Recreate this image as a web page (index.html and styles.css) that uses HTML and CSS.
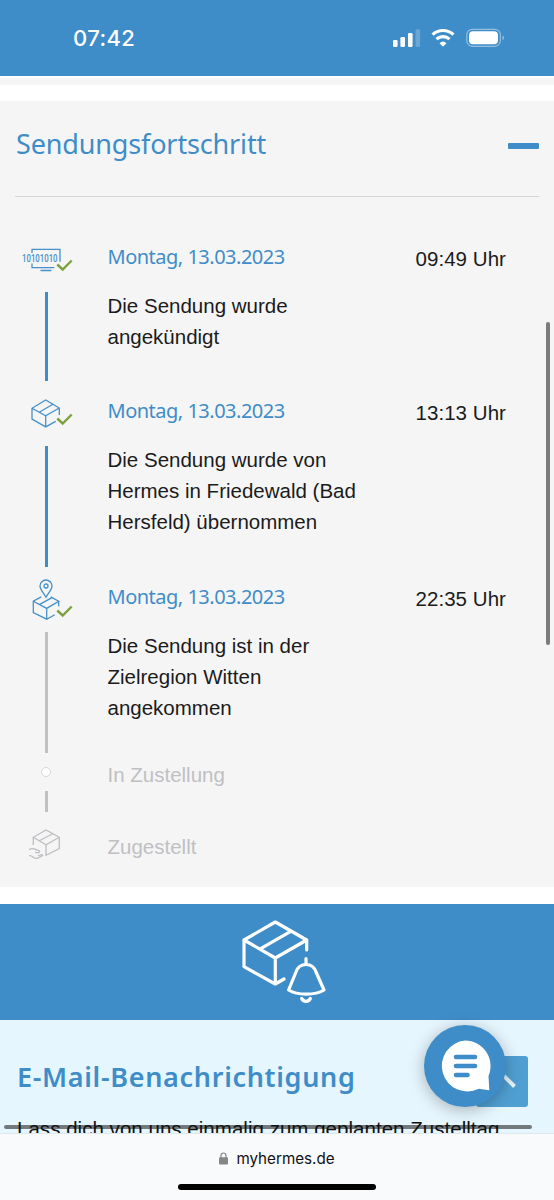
FILE: index.html
```html
<!DOCTYPE html>
<html lang="de">
<head>
    <meta charset="UTF-8">
    <meta name="viewport" content="width=device-width, initial-scale=1.0">
    <title>Sendungsverfolgung</title>
    <link rel="stylesheet" href="styles.css">
</head>
<body>
    <header class="status-bar">
        <span class="clock">07:42</span>
        <svg class="status-icons" width="114" height="22" viewBox="0 0 114 22">
            <g fill="#fff">
                <rect x="1" y="13" width="4.6" height="7" rx="1.3"/>
                <rect x="8.4" y="10" width="4.6" height="10" rx="1.3"/>
                <rect x="16" y="6" width="4.6" height="14" rx="1.3"/>
                <rect x="23.5" y="2.3" width="4.6" height="17.7" rx="1.3" opacity=".22"/>
                <path d="M51 19.700l-3.500-3.500a5.200 5.200 0 0 1 7 0z"/>
                <rect x="77" y="4.300" width="29" height="13" rx="4"/>
                <path d="M110.500 8.600c2 .8 2 3.800 0 4.600z" opacity=".45"/>
            </g>
            <g fill="none" stroke="#fff">
                <path d="M40.600 7.700a15 15 0 0 1 20.800 0M44.500 12.200a9.400 9.400 0 0 1 13 0" stroke-width="3.200"/>
                <rect x="74.800" y="2.300" width="33.500" height="17" rx="5.500" stroke-width="1.200" opacity=".45"/>
            </g>
        </svg>
    </header>

    <main class="page">
        <div class="previous-section"></div>

        <section class="progress">
            <div class="progress-head">
                <h2>Sendungsfortschritt</h2>
                <span class="collapse"></span>
            </div>

            <div class="step">
                <div class="rail">
                    <svg class="icon" width="60" height="50" viewBox="0 0 60 50">
                        <path d="M16 11V7.300h28v12.500M16 21.500v4.200h22.300M24.500 28.500h11"/>
                        <text x="6" y="19.500" textLength="35.500" lengthAdjust="spacingAndGlyphs">10101010</text>
                        <path class="check" d="M41.300 22.500l5.400 5 9-9"/>
                    </svg>
                    <span class="line"></span>
                </div>
                <div class="info">
                    <h3>Montag, 13.03.2023</h3>
                    <p>Die Sendung wurde angekündigt</p>
                </div>
                <span class="time">09:49 Uhr</span>
            </div>

            <div class="step">
                <div class="rail">
                    <svg class="icon" width="60" height="50" viewBox="0 0 60 50">
                        <path d="M43.300 19v-7L29.700 3.900 16 12.300V23l13.700 7.900 10-5.500M16 12.300l13.700 7.500L43.300 12M29.700 19.800v11.100M23.300 16.200L37.300 8"/>
                        <path class="check" d="M41.300 22.500l5.400 5 9-9"/>
                    </svg>
                    <span class="line"></span>
                </div>
                <div class="info">
                    <h3>Montag, 13.03.2023</h3>
                    <p>Die Sendung wurde von Hermes in Friedewald (Bad Hersfeld) übernommen</p>
                </div>
                <span class="time">13:13 Uhr</span>
            </div>

            <div class="step step-current">
                <div class="rail">
                    <svg class="icon" width="60" height="50" viewBox="0 0 60 50">
                        <path d="M30 15.300C27 10 24 7.500 24 4a6 6 0 0 1 12 0c0 3.500-3 6-6 11.300z"/>
                        <circle cx="30" cy="4" r="2"/>
                        <path d="M25.300 14.900l-8 4.300v11.500l13.400 6.500 8-4.500M17.300 19.200l13.400 7.200 12-7.200-8-4.300M42.700 19.200v5M30.700 26.400v10.800M23.300 22.600l12.700-7"/>
                        <path class="check" d="M41.300 28.500l5.400 5 9-9"/>
                    </svg>
                    <span class="line line-grey"></span>
                </div>
                <div class="info">
                    <h3>Montag, 13.03.2023</h3>
                    <p>Die Sendung ist in der Zielregion Witten angekommen</p>
                </div>
                <span class="time">22:35 Uhr</span>
            </div>

            <div class="step step-open">
                <div class="rail">
                    <span class="dot"></span>
                    <span class="line line-grey"></span>
                </div>
                <p class="pending">In Zustellung</p>
            </div>

            <div class="step step-last">
                <div class="rail">
                    <svg class="icon icon-grey" width="60" height="50" viewBox="0 0 60 50">
                        <path d="M17.300 18v-7.700L30 3l13.300 7.300v11.400L30 28.300V17.700M17.300 10.300L30 17.700l13.300-7.400M23.300 13.800l13.400-7.100"/>
                        <path d="M13 22.600c2-1 4.500-1.300 6.200-.2 1.500 1 4.500.6 4.500 2.200 0 1.300-2.700 1-4.700 1M13 28.700c2.500-.3 3 .5 4.500 1.800 1.500 1 3.500.9 5 .4l4.200-2.600c-.7-1-1.700-.7-2.700-.3l-2 .6"/>
                    </svg>
                </div>
                <p class="pending">Zugestellt</p>
            </div>
        </section>

        <div class="banner">
            <svg width="86" height="86" viewBox="0 0 86 86">
                <path d="M64.700 31V21L33.300 3 2 21v26.700L33.300 65l8.700-5M2 21l31.300 18 31.400-18M33.300 39v26M18.700 29.700l30-17.400"/>
                <path d="M64 39.500V45M64 45.500c-6 0-8.500 3-10 7.500L46.600 71c9 5.500 26.400 5.500 35.400 0L74 53c-1.500-4.500-4-7.500-10-7.500zM59.700 79.500c1.600 3.700 7 3.700 8.600 0"/>
            </svg>
        </div>

        <section class="mail">
            <h2>E-Mail-Benachrichtigung</h2>
            <span class="scroll-x"></span>
            <p>Lass dich von uns einmalig zum geplanten Zustelltag</p>
        </section>

        <span class="scroll-y"></span>
        <div class="to-top">
            <svg width="52" height="52" viewBox="0 0 52 52">
                <path d="M13 31l13-13 12.500 12.500"/>
            </svg>
        </div>
        <div class="chat">
            <svg width="82" height="82" viewBox="0 0 82 82">
                <path fill="#fff" d="M41 15.500a25.500 25.500 0 0 1 23.500 35.500l.8 14.200-10.600-1.500A25.500 25.500 0 1 1 41 15.500z"/>
                <path class="chat-lines" d="M32 32h19M32 41h19M32 50h11.500"/>
            </svg>
        </div>
    </main>

    <footer class="browser-bar">
        <div class="address">
            <svg width="9" height="13" viewBox="0 0 9 13">
                <rect y="5.300" width="9" height="7.200" rx="1.200" fill="#858688"/>
                <path d="M2 6V3.500a2.500 2.500 0 0 1 5 0V6" fill="none" stroke="#858688" stroke-width="1.200"/>
            </svg>
            <span>myhermes.de</span>
        </div>
        <span class="home-indicator"></span>
    </footer>
</body>
</html>
```

FILE: styles.css
```css
* {
    box-sizing: border-box;
}

body {
    margin: 0;
    width: 554px;
    height: 1200px;
    overflow: hidden;
    display: flex;
    flex-direction: column;
    background-color: #fff;
    color: #1b1b1b;
    font-family: "Liberation Sans", Arial, sans-serif;
    font-size: 20.5px;
    line-height: 31px;
}

h2, h3, p {
    margin: 0;
}

h2, h3 {
    font-family: "Noto Sans", sans-serif;
    font-weight: 400;
    color: #3f8dc8;
}

svg {
    display: block;
    overflow: visible;
}

.status-bar {
    height: 76px;
    flex: none;
    background-color: #3f8dc8;
    color: #fff;
    display: flex;
    align-items: center;
    justify-content: space-between;
    padding: 0 48px 0 73px;
}

.clock {
    font-family: Inter, sans-serif;
    font-size: 22px;
    font-weight: 500;
    letter-spacing: 0.4px;
}

.page {
    position: relative;
    height: 1057px;
    flex: none;
    overflow: hidden;
}

.previous-section {
    height: 7px;
    margin-top: 2px;
    background-color: #f5f5f5;
}

.progress {
    height: 786px;
    margin-top: 16px;
    padding: 0 15px;
    background-color: #f5f5f5;
}

.progress-head {
    height: 96px;
    margin-bottom: 45px;
    padding: 27px 0 0 1px;
    border-bottom: 1px solid #d5d5d5;
    display: flex;
    justify-content: space-between;
}

.progress-head h2 {
    font-size: 27px;
    line-height: 31px;
    letter-spacing: -0.15px;
}

.collapse {
    width: 31px;
    height: 6px;
    margin-top: 15px;
    border-radius: 1px;
    background-color: #3f8dc8;
}

.step {
    display: flex;
}

.rail {
    width: 60px;
    margin: 0 31.5px 0 1px;
    flex: none;
    display: flex;
    flex-direction: column;
}

.icon {
    flex: none;
    fill: none;
    stroke: #4590c9;
    stroke-width: 1.3;
}

.icon text {
    font-family: Roboto, sans-serif;
    font-size: 10px;
    font-weight: 500;
    fill: #4590c9;
    stroke: none;
}

.icon .check {
    stroke: #7ba23f;
    stroke-width: 2.4;
}

.icon-grey {
    stroke: #bdbec2;
}

.line {
    width: 3px;
    margin-left: 28.5px;
    margin-bottom: 15px;
    flex: 1;
    background-color: #3f8dc8;
}

.line-grey {
    background-color: #c1c1c1;
}

.info {
    width: 255px;
    margin-top: -1px;
    padding-bottom: 44.4px;
}

.info h3 {
    margin-bottom: 18px;
    font-size: 20px;
    line-height: 31px;
    letter-spacing: -0.5px;
}

.time {
    margin-left: auto;
    padding: 1px 33px 0 0;
    white-space: nowrap;
    letter-spacing: 0.05px;
}

.step-current {
    height: 178px;
}

.step-current .line {
    margin-bottom: 7px;
}

.step-open {
    height: 67px;
}

.dot {
    width: 10px;
    height: 10px;
    margin: 7px 0 14px 25px;
    border: 1px solid #d8d8d8;
    border-radius: 50%;
    background-color: #fff;
}

.pending {
    margin-top: -1px;
    color: #bfc0c4;
}

.step-last .pending {
    padding-top: 5px;
}

.banner {
    height: 116px;
    margin-top: 17px;
    padding-top: 15px;
    background-color: #3f8dc8;
    display: flex;
    justify-content: center;
}

.banner svg {
    margin-left: 15px;
    height: 86px;
    fill: none;
    stroke: #fff;
    stroke-width: 3.2;
    stroke-linecap: round;
    stroke-linejoin: round;
}

.mail {
    height: 113px;
    padding: 39px 17px 0;
    background-color: #e6f6fe;
    color: #111;
    white-space: nowrap;
}

.mail h2 {
    margin-bottom: 18px;
    font-size: 27px;
    line-height: 36px;
    font-weight: 600;
    letter-spacing: 0.68px;
}

.mail p {
    position: relative;
    letter-spacing: 0.03px;
}

/* overlays of the scrolled page */
.scroll-x {
    position: absolute;
    left: 4px;
    bottom: 4px;
    width: 528px;
    height: 4px;
    border-radius: 2px;
    background-color: #727a7e;
}

.scroll-y {
    position: absolute;
    right: 4px;
    top: 246px;
    width: 4px;
    height: 323px;
    border-radius: 2px;
    background-color: #7b7b7b;
}

.to-top {
    position: absolute;
    left: 476px;
    top: 980px;
    width: 52px;
    height: 51px;
    border-radius: 3px;
    background-color: #509fd2;
}

.to-top path {
    fill: none;
    stroke: #e6f3fa;
    stroke-width: 4;
}

.chat {
    position: absolute;
    left: 424px;
    top: 949px;
    width: 82px;
    height: 82px;
    border-radius: 50%;
    background-color: #3f8dc8;
    box-shadow: 0 3px 16px rgba(0, 0, 0, 0.28);
}

.chat .chat-lines {
    stroke: #3f8dc8;
    stroke-width: 4.6;
    stroke-linecap: round;
}

.browser-bar {
    height: 67px;
    flex: none;
    padding-top: 9px;
    border-top: 1px solid #dfe8ee;
    background-color: #f9fafc;
    display: flex;
    flex-direction: column;
    align-items: center;
}

.address {
    display: flex;
    align-items: center;
    gap: 8px;
    font-family: Inter, sans-serif;
    font-size: 15.2px;
    color: #111;
}

.home-indicator {
    width: 198px;
    height: 6px;
    margin-top: 10px;
    border-radius: 3px;
    background-color: #000;
}
```
